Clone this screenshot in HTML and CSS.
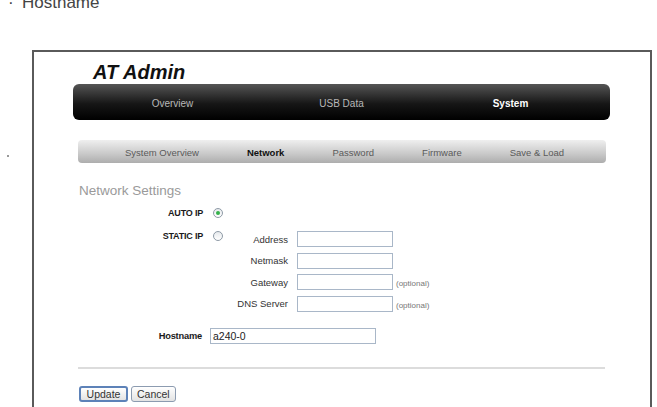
FILE: index.html
```html
<!DOCTYPE html>
<html lang="en">
<head>
  <meta charset="UTF-8">
  <title>AT Admin - Network Settings</title>
  <meta name="viewport" content="width=device-width, initial-scale=1">
  <link rel="stylesheet" href="styles.css">
</head>
<body>
  <div class="doc-head"><span class="bullet">·</span>Hostname</div>
  <div class="page">
    <div class="gutter"><span class="mark"></span></div>
    <div class="frame">
      <div class="content">
        <h1 class="brand">AT Admin</h1>
        <nav class="main-nav">
          <a class="main-item">Overview</a>
          <a class="main-item">USB Data</a>
          <a class="main-item active">System</a>
        </nav>
        <nav class="sub-nav">
          <a class="sub-item">System Overview</a>
          <a class="sub-item active">Network</a>
          <a class="sub-item">Password</a>
          <a class="sub-item">Firmware</a>
          <a class="sub-item">Save &amp; Load</a>
        </nav>
        <h2 class="section-title">Network Settings</h2>
        <div class="form">
          <div class="ip-row">
            <span class="key">AUTO IP</span>
            <span class="radio on"></span>
          </div>
          <div class="ip-row static">
            <span class="key">STATIC IP</span>
            <span class="radio"></span>
            <div class="fields">
              <div class="field"><span class="field-label">Address</span><span class="input"></span></div>
              <div class="field"><span class="field-label">Netmask</span><span class="input"></span></div>
              <div class="field"><span class="field-label">Gateway</span><span class="input"></span><span class="note">(optional)</span></div>
              <div class="field"><span class="field-label">DNS Server</span><span class="input"></span><span class="note">(optional)</span></div>
            </div>
          </div>
          <div class="host-row">
            <span class="key">Hostname</span>
            <span class="input wide">a240-0</span>
          </div>
        </div>
        <div class="rule"></div>
        <div class="actions">
          <button class="btn focus">Update</button>
          <button class="btn">Cancel</button>
        </div>
      </div>
    </div>
  </div>
</body>
</html>
```

FILE: styles.css
```css
body {
  margin: 0;
  background: #fff;
  font-family: 'Liberation Sans', Arial, sans-serif;
  color: #333;
  overflow: hidden;
}
.doc-head {
  margin-top: -6px;
  height: 17px;
  line-height: 17px;
  font-size: 17px;
  color: #444;
  padding-left: 8px;
}
.bullet {
  display: inline-block;
  width: 14px;
}
.page {
  display: flex;
  margin-top: 39px;
}
.gutter {
  width: 32px;
  flex: none;
}
.mark {
  display: block;
  width: 2px;
  height: 2px;
  background: #999;
  margin: 105px 0 0 7px;
}
.frame {
  width: 616px;
  height: 355px;
  border: 2px solid #5a5a5a;
  border-bottom: none;
  flex: none;
}
.content {
  margin: 0 40px 0 39px;
}
.brand {
  margin: 8px 0 0 20px;
  font-size: 20px;
  line-height: 24px;
  font-weight: 700;
  font-style: italic;
  color: #111;
}
.main-nav {
  display: flex;
  height: 36px;
  padding: 0 15px;
  border-radius: 6px;
  background: linear-gradient(#555, #161616 55%, #000);
  align-items: center;
}
.main-item {
  flex: 1;
  text-align: center;
  font-size: 10px;
  color: #b8b8b8;
  padding-top: 3px;
}
.main-item.active {
  color: #fff;
  font-weight: 700;
}
.sub-nav {
  display: flex;
  gap: 48px;
  height: 23px;
  margin: 20px 4px 0 5px;
  padding-left: 47px;
  border-radius: 4px;
  background: linear-gradient(#efefef, #c9c9c9 60%, #adadad);
  align-items: center;
}
.sub-item {
  font-size: 9.5px;
  color: #5a5a5a;
  padding-top: 2px;
}
.sub-item.active {
  color: #111;
  font-weight: 700;
}
.section-title {
  margin: 19.5px 0 0 6px;
  font-size: 13.5px;
  line-height: 16px;
  font-weight: 400;
  color: #9a9a9a;
}
.form {
  margin-left: 5px;
}
.ip-row {
  display: flex;
  align-items: center;
  height: 14px;
  margin-top: 7.5px;
}
.ip-row.static {
  align-items: flex-start;
  height: auto;
  margin-top: 9px;
}
.key {
  width: 125px;
  text-align: right;
  font-size: 9px;
  line-height: 14px;
  font-weight: 700;
  color: #1a1a1a;
  letter-spacing: -0.2px;
  flex: none;
}
.radio {
  width: 8px;
  height: 8px;
  margin-left: 10px;
  border: 1px solid #8e9aa6;
  border-radius: 50%;
  background: linear-gradient(#e6e9ec, #fff);
  display: flex;
  align-items: center;
  justify-content: center;
  flex: none;
}
.static .radio {
  margin-top: 2px;
}
.radio.on::after {
  content: "";
  width: 4px;
  height: 4px;
  border-radius: 50%;
  background: #35b24a;
}
.fields {
  margin: 2px 0 0 3px;
  display: flex;
  flex-direction: column;
  gap: 5.6px;
}
.field {
  display: flex;
  align-items: center;
  height: 16px;
}
.field-label {
  width: 62px;
  text-align: right;
  font-size: 9.5px;
  color: #333;
  flex: none;
}
.input {
  box-sizing: border-box;
  width: 96px;
  height: 16px;
  margin-left: 9px;
  border: 1px solid #a9b7c8;
  background: #fff;
  font-size: 10.5px;
  line-height: 14px;
  padding-left: 2px;
  color: #222;
  flex: none;
}
.note {
  margin-left: 3px;
  font-size: 8px;
  color: #777;
  align-self: flex-end;
  line-height: 12px;
}
.host-row {
  display: flex;
  align-items: center;
  margin-top: 16px;
  height: 16px;
}
.host-row .key {
  width: 124px;
  font-size: 9.3px;
}
.input.wide {
  width: 166px;
  margin-left: 8px;
}
.rule {
  height: 2px;
  background: #dcdcdc;
  margin: 23px 5px 0 5px;
}
.actions {
  display: flex;
  gap: 3px;
  margin: 17px 0 0 6px;
}
.btn {
  box-sizing: border-box;
  height: 16px;
  padding: 0 5px;
  font-family: 'Liberation Sans', Arial, sans-serif;
  font-size: 10.5px;
  color: #333;
  border: 1px solid #8c9bb0;
  border-radius: 3px;
  background: linear-gradient(#fff, #e3e3e3);
}
.btn.focus {
  width: 49px;
  border: 2px solid #5d82b8;
}
```
